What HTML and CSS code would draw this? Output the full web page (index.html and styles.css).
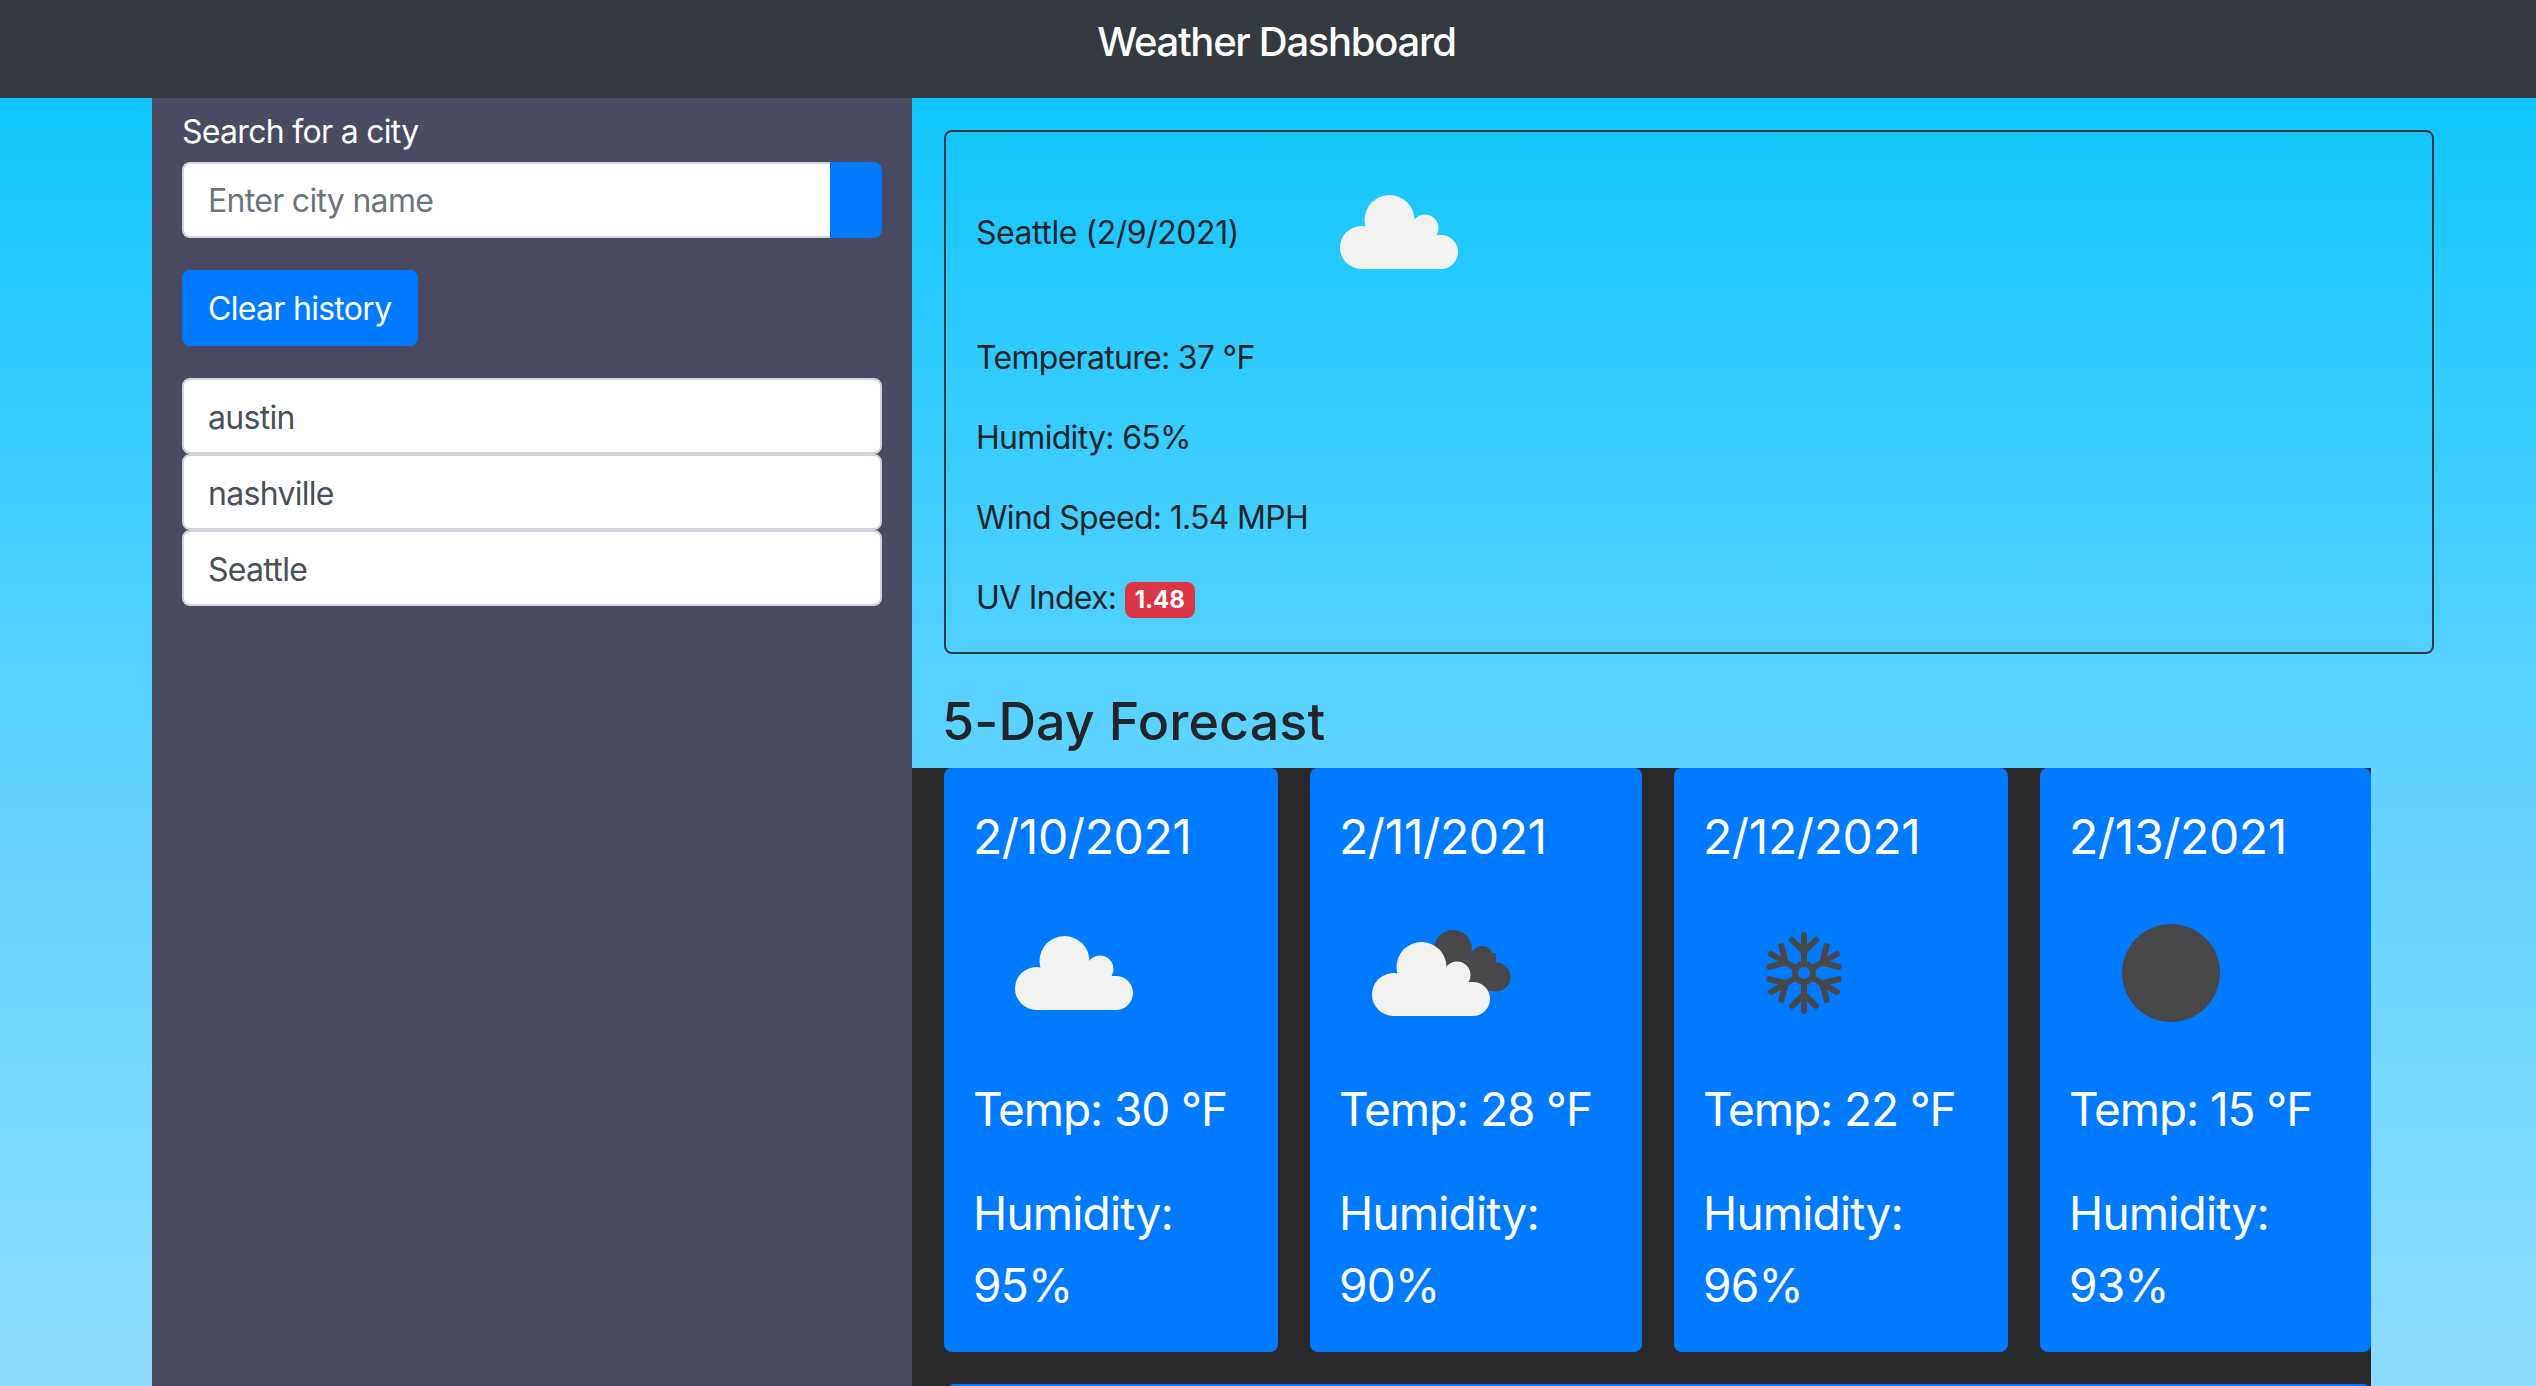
FILE: index.html
```html
<!DOCTYPE html>
<html lang="en">
<head>
    <meta charset="UTF-8">
    <meta name="viewport" content="width=device-width, initial-scale=1.0">
    <title>Weather Dashboard</title>
    <link rel="stylesheet" href="styles.css">
</head>
<body>
    <svg class="defs" width="0" height="0">
        <symbol id="cloud" viewBox="0 0 118 74">
            <circle cx="21.5" cy="52.5" r="21.5"/>
            <circle cx="49.5" cy="25" r="25"/>
            <circle cx="85" cy="33" r="13.5"/>
            <circle cx="101" cy="57" r="17"/>
            <rect x="21.5" y="40" width="79.5" height="34"/>
            <rect x="50" y="30" width="35" height="15"/>
        </symbol>
    </svg>

    <header class="top-bar">
        <h1>Weather Dashboard</h1>
    </header>

    <div class="page">
        <aside class="sidebar">
            <label for="city">Search for a city</label>
            <div class="search-group">
                <input type="text" id="city" placeholder="Enter city name">
                <button type="button" class="search-btn" aria-label="Search"></button>
            </div>
            <button type="button" class="clear-btn">Clear history</button>
            <ul class="history">
                <li>austin</li>
                <li>nashville</li>
                <li>Seattle</li>
            </ul>
        </aside>

        <main class="content">
            <section class="today">
                <div class="today-head">
                    <span class="city-name">Seattle (2/9/2021)</span>
                    <svg class="today-icon" viewBox="0 0 140 140">
                        <use href="#cloud" class="cloud-light" x="11" y="33" width="118" height="74"/>
                    </svg>
                </div>
                <p>Temperature: 37 °F</p>
                <p>Humidity: 65%</p>
                <p>Wind Speed: 1.54 MPH</p>
                <p>UV Index: <span class="badge">1.48</span></p>
            </section>

            <h2>5-Day Forecast</h2>

            <div class="forecast">
                <article class="day">
                    <h5>2/10/2021</h5>
                    <svg class="day-icon" viewBox="0 0 200 200">
                        <use href="#cloud" class="cloud-light" x="41" y="63" width="118" height="74"/>
                    </svg>
                    <p class="temp">Temp: 30 °F</p>
                    <p>Humidity: 95%</p>
                </article>
                <article class="day">
                    <h5>2/11/2021</h5>
                    <svg class="day-icon" viewBox="0 0 200 200">
                        <g class="dark-shape">
                            <circle cx="113" cy="76" r="19"/>
                            <circle cx="142" cy="84" r="11"/>
                            <circle cx="156" cy="104" r="14.5"/>
                            <rect x="113" y="80" width="43" height="38"/>
                        </g>
                        <use href="#cloud" class="cloud-light" x="32" y="69" width="118" height="74"/>
                    </svg>
                    <p class="temp">Temp: 28 °F</p>
                    <p>Humidity: 90%</p>
                </article>
                <article class="day">
                    <h5>2/12/2021</h5>
                    <svg class="day-icon" viewBox="0 0 200 200">
                        <g class="flake" transform="translate(100 100)">
                            <circle r="9"/>
                            <path id="arm" d="M0 -12V-38M-12 -33L0 -21L12 -33"/>
                            <use href="#arm" transform="rotate(60)"/>
                            <use href="#arm" transform="rotate(120)"/>
                            <use href="#arm" transform="rotate(180)"/>
                            <use href="#arm" transform="rotate(240)"/>
                            <use href="#arm" transform="rotate(300)"/>
                        </g>
                    </svg>
                    <p class="temp">Temp: 22 °F</p>
                    <p>Humidity: 96%</p>
                </article>
                <article class="day">
                    <h5>2/13/2021</h5>
                    <svg class="day-icon" viewBox="0 0 200 200">
                        <circle class="dark-shape" cx="101" cy="100" r="49"/>
                    </svg>
                    <p class="temp">Temp: 15 °F</p>
                    <p>Humidity: 93%</p>
                </article>
                <article class="day day-wide"></article>
            </div>
        </main>
    </div>
</body>
</html>
```

FILE: styles.css
```css
html, body {
    height: 100%;
}

body {
    margin: 0;
    overflow: hidden;
    display: flex;
    flex-direction: column;
    font-family: 'Inter', 'Liberation Sans', sans-serif;
    font-size: 32px;
    line-height: 48px;
    letter-spacing: -0.7px;
    color: #212529;
}

.defs {
    position: absolute;
}

.top-bar {
    flex: none;
    box-sizing: border-box;
    height: 98px;
    padding: 12px 0 0 17px;
    background: #343a40;
    color: #fff;
    text-align: center;
}

.top-bar h1 {
    margin: 0;
    font-size: 40px;
    line-height: 60px;
    font-weight: 500;
    letter-spacing: -1.3px;
}

.page {
    flex: 1;
    min-height: 0;
    display: flex;
    padding: 0 102px 0 152px;
    background: linear-gradient(180deg, #10c6ff, #60d3ff 52%, #8edcff);
}

.sidebar {
    flex: none;
    box-sizing: border-box;
    width: 760px;
    padding: 10px 30px 0;
    background: #4a4a60;
    color: #fff;
}

.sidebar label {
    display: block;
    margin-bottom: 6px;
}

.search-group {
    display: flex;
    height: 76px;
}

.search-group input {
    flex: 1;
    min-width: 0;
    box-sizing: border-box;
    padding: 2px 24px 0;
    border: 2px solid #ced4da;
    border-right: none;
    border-radius: 8px 0 0 8px;
    background: #fff;
    font: inherit;
    letter-spacing: inherit;
    color: #495057;
}

.search-group input::placeholder {
    color: #6c757d;
}

.search-btn {
    flex: none;
    width: 52px;
    border: none;
    border-radius: 0 8px 8px 0;
    background: #007bff;
}

.clear-btn {
    display: block;
    height: 76px;
    margin: 32px 0;
    padding: 2px 27px 0 26px;
    border: none;
    border-radius: 8px;
    background: #007bff;
    color: #fff;
    font: inherit;
    letter-spacing: inherit;
}

.history {
    margin: 0;
    padding: 0;
    list-style: none;
}

.history li {
    box-sizing: border-box;
    height: 76px;
    padding: 14px 24px 0;
    border: 2px solid #ced4da;
    border-radius: 8px;
    background: #fff;
    color: #495057;
}

.content {
    flex: 1;
    min-width: 0;
    padding: 32px 0 0 32px;
}

.today {
    box-sizing: border-box;
    height: 524px;
    padding: 30px;
    border: 2px solid #343a40;
    border-radius: 8px;
}

.today-head {
    display: flex;
    align-items: center;
    height: 140px;
    margin-bottom: 32px;
}

.city-name {
    width: 353px;
    padding-top: 2px;
    letter-spacing: -0.45px;
}

.today-icon {
    width: 140px;
    height: 140px;
}

.today p {
    margin: 0 0 32px;
}

.today p:last-child {
    margin-bottom: 0;
}

.badge {
    display: inline-block;
    padding: 0 10px;
    border-radius: 8px;
    background: #dc3545;
    color: #fff;
    font-size: 24px;
    line-height: 36px;
    font-weight: 700;
    letter-spacing: 0;
    vertical-align: 1px;
}

.cloud-light {
    fill: #f2f2f0;
}

.dark-shape {
    fill: #48484a;
}

.flake {
    fill: none;
    stroke: #48484a;
    stroke-width: 6;
    stroke-linecap: round;
    stroke-linejoin: round;
}

h2 {
    margin: 34px 0 13px -2px;
    font-size: 52px;
    line-height: 67px;
    font-weight: 500;
    letter-spacing: 0.1px;
}

.forecast {
    display: grid;
    grid-template-columns: 334px 332px 334px 331px;
    gap: 32px;
    margin: 0 63px 0 -32px;
    padding-left: 32px;
    background: #2a2a2d;
}

.day {
    box-sizing: border-box;
    height: 584px;
    padding: 30px 29px;
    border-radius: 8px;
    background: #007bff;
    color: #fff;
    font-size: 46px;
    line-height: 72px;
    letter-spacing: -0.8px;
}

.day h5 {
    margin: 0;
    padding-top: 3px;
    font-size: 48px;
    line-height: 72px;
    font-weight: 400;
    letter-spacing: -0.4px;
}

.day-icon {
    display: block;
    width: 200px;
    height: 200px;
    margin-left: 1px;
}

.day p {
    margin: 0 0 32px;
}

.day p.temp {
    letter-spacing: -1.1px;
}

.day p:last-child {
    margin-bottom: 0;
}

.day-wide {
    grid-column: 1 / -1;
    margin-left: 2px;
}
```
